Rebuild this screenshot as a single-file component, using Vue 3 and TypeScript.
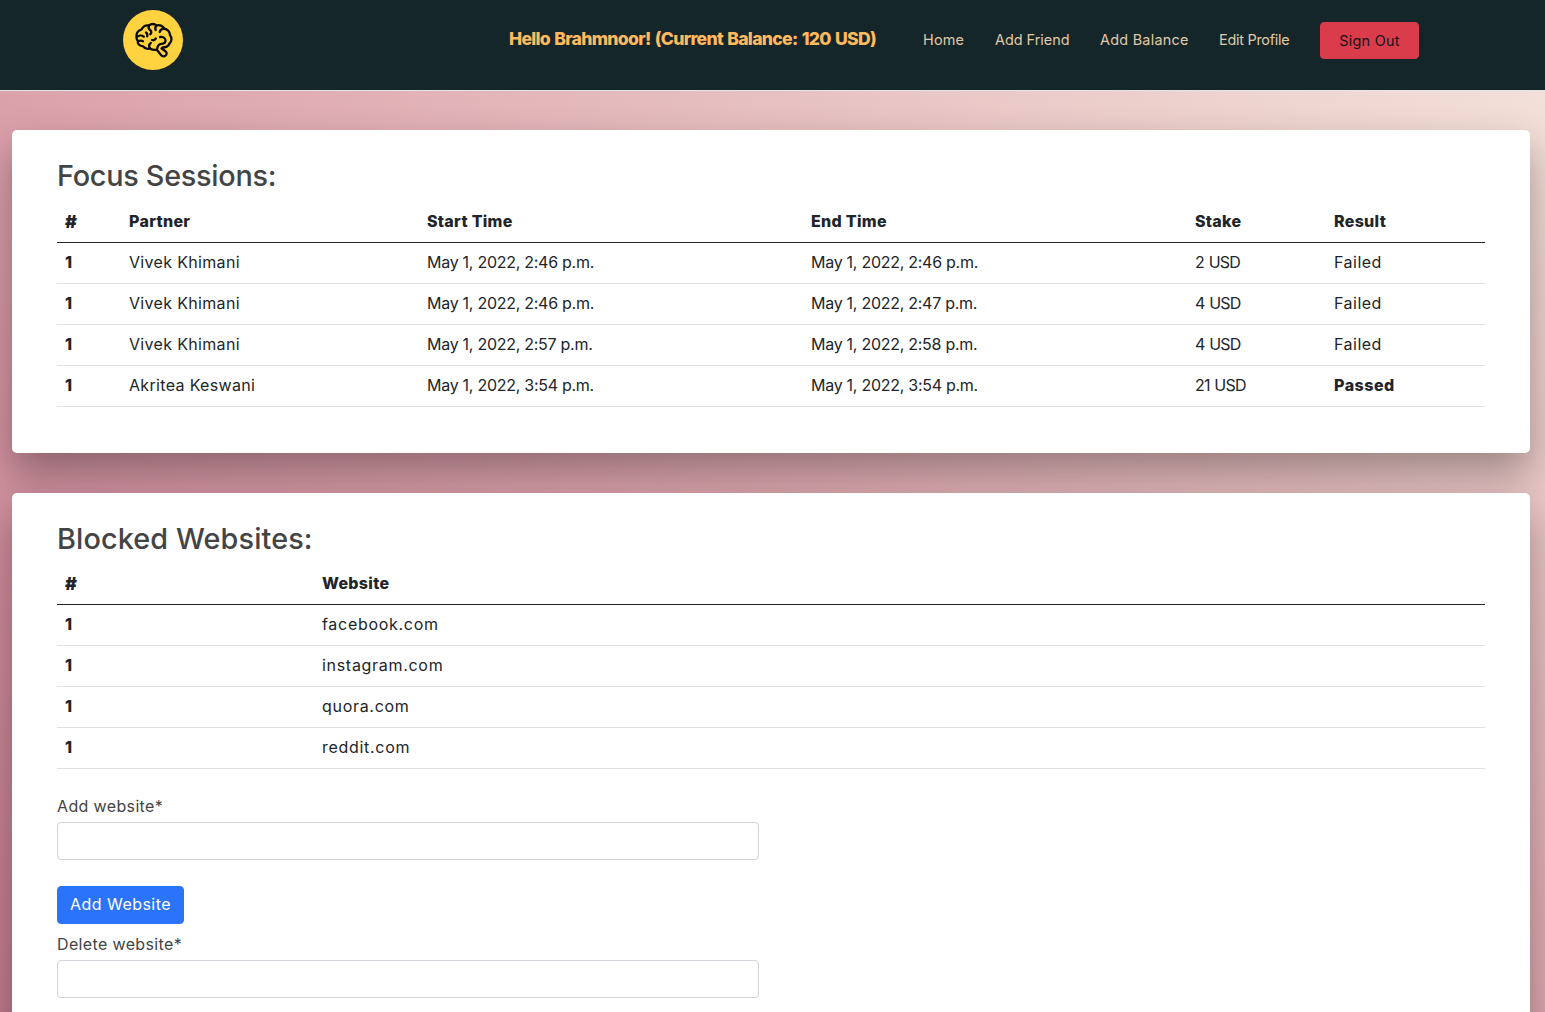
<script setup lang="ts">
interface Session { partner: string; start: string; end: string; stake: string; result: string }
const sessions: Session[] = [
  { partner: 'Vivek Khimani', start: 'May 1, 2022, 2:46 p.m.', end: 'May 1, 2022, 2:46 p.m.', stake: '2 USD', result: 'Failed' },
  { partner: 'Vivek Khimani', start: 'May 1, 2022, 2:46 p.m.', end: 'May 1, 2022, 2:47 p.m.', stake: '4 USD', result: 'Failed' },
  { partner: 'Vivek Khimani', start: 'May 1, 2022, 2:57 p.m.', end: 'May 1, 2022, 2:58 p.m.', stake: '4 USD', result: 'Failed' },
  { partner: 'Akritea Keswani', start: 'May 1, 2022, 3:54 p.m.', end: 'May 1, 2022, 3:54 p.m.', stake: '21 USD', result: 'Passed' },
]
const sites = ['facebook.com', 'instagram.com', 'quora.com', 'reddit.com']
const links = ['Home', 'Add Friend', 'Add Balance', 'Edit Profile']
</script>

<template>
  <div class="page">
    <nav class="navbar">
      <div class="logo">
        <svg width="60" height="60" viewBox="0 0 60 60" fill="none" stroke="#0b0b0b" stroke-width="2.3" stroke-linecap="round" stroke-linejoin="round">
          <path d="M13.500 27C13 23 15.500 20.500 18.500 19.500C20 16.500 23 15 26 15.500C28 13.500 31.500 13.500 33.500 15.500C36.500 14.500 40 16 41 18.500C44.500 19 47 22 47 25C49 27.500 49 31.500 46.500 33.500C45.500 36 42.500 37.500 39.500 37.500L38.500 38.500L42.800 41.500C44.500 43 43.500 46 41 46.300C39.500 46.500 38.500 45.800 37.800 44.800L33.800 39.800C31.500 40.200 29 39.800 27 38.500C24.500 39.300 21.500 38.300 20 36.300C16.500 36.300 14 33.500 15 31C13.800 30 13.500 28.500 13.500 27Z" />
          <path d="M13.800 27c2-1.800 5-2 7-.3M15 31.500c1.500-.8 3.500-1 5-.3M26 15.500c-.8 1.800-.3 3.800 1.500 5 1.200 1 1 2.700-.2 3.700M33.500 15.500c-1.200 1.300-1.500 3-.8 4.500M41 18.500c-2.200.3-3.800 1.500-4.300 3.500M23 22.500c1.200 1 1.600 2.400 1.200 3.800M29 30c1.500.5 3 0 3.800-1.500M27 38.500c-1.300-2-1-4.200.8-5.500M37 27c3-.5 5.500 1 5.500 3.500 0 2-2 3.200-4 3.400-2.300.2-4 2-4.300 4.800" />
        </svg>
      </div>
      <strong class="hello">Hello Brahmnoor! (Current Balance: 120 USD)</strong>
      <ul class="nav-links">
        <li v-for="link in links" :key="link"><a>{{ link }}</a></li>
      </ul>
      <button class="signout" type="button">Sign Out</button>
    </nav>

    <main class="content">
      <section class="card sessions">
        <h2>Focus Sessions:</h2>
        <table>
          <colgroup>
            <col class="c1" /><col class="c2" /><col class="c3" />
            <col class="c3" /><col class="c5" /><col />
          </colgroup>
          <thead>
            <tr><th class="hash">#</th><th>Partner</th><th>Start Time</th><th>End Time</th><th>Stake</th><th>Result</th></tr>
          </thead>
          <tbody>
            <tr v-for="(s, i) in sessions" :key="i">
              <td class="num">1</td>
              <td class="name">{{ s.partner }}</td>
              <td class="date">{{ s.start }}</td>
              <td class="date">{{ s.end }}</td>
              <td class="stake">{{ s.stake }}</td>
              <td class="result" :class="{ passed: s.result === 'Passed' }">{{ s.result }}</td>
            </tr>
          </tbody>
        </table>
      </section>

      <section class="card websites">
        <h2>Blocked Websites:</h2>
        <table>
          <colgroup><col class="w1" /><col /></colgroup>
          <thead><tr><th class="hash">#</th><th>Website</th></tr></thead>
          <tbody>
            <tr v-for="site in sites" :key="site"><td class="num">1</td><td class="site">{{ site }}</td></tr>
          </tbody>
        </table>
        <form class="site-form" @submit.prevent>
          <label for="add-site">Add website*</label>
          <input id="add-site" type="text" />
          <button class="primary" type="submit">Add Website</button>
          <label for="del-site">Delete website*</label>
          <input id="del-site" type="text" />
        </form>
      </section>
    </main>
  </div>
</template>

<style>
html, body { margin: 0; overflow: hidden; }
</style>

<style scoped>
.page {
  height: 1012px;
  overflow: hidden;
  font-family: Inter, "Liberation Sans", sans-serif;
  font-size: 16px;
  color: #212529;
  background: linear-gradient(to top right, #c27b8d 0%, #dba1ab 45%, #f5e6dc 100%);
}
.navbar {
  box-sizing: border-box;
  height: 91px;
  display: flex;
  align-items: center;
  padding: 0 126px 10px 123px;
  background: #15262b;
  border-bottom: 1px solid #dfe6ea;
}
.logo { width: 60px; height: 60px; border-radius: 50%; background: #ffd23f; flex: none; margin-right: auto; }
.logo svg { display: block; }
.hello { font-size: 17.6px; font-weight: 800; letter-spacing: -0.7px; word-spacing: 1.1px; color: #ffb95e; line-height: 1.2; margin-top: -2px; white-space: nowrap; }
.nav-links { display: flex; gap: 30px; list-style: none; margin: 0 30px 0 47px; padding: 0; }
.nav-links a { font-size: 14.4px; color: #e0c9a6; line-height: 1.5; white-space: nowrap; }
.nav-links li:nth-child(1) { width: 42px; }
.nav-links li:nth-child(1) a { letter-spacing: 0.2px; }
.nav-links li:nth-child(2) { width: 75px; }
.nav-links li:nth-child(3) { width: 89px; }
.nav-links li:nth-child(3) a { letter-spacing: 0.27px; }
.nav-links li:nth-child(4) { width: 71px; }
.nav-links li:nth-child(4) a { letter-spacing: -0.25px; }
.signout {
  width: 99px; height: 37px; border: 1px solid #da3c4b; border-radius: 4px;
  background: #da3c4b; color: #14121a; font: inherit; font-size: 14.4px; letter-spacing: 0.25px; padding: 0;
}
.content { padding: 39px 15px 0 12px; display: flex; flex-direction: column; gap: 40px; }
.card {
  background: #fff; border-radius: 5px; padding: 24px 45px 0;
  box-shadow: 0 20px 40px rgba(0, 0, 0, 0.33);
}
.sessions { height: 323px; box-sizing: border-box; }
.websites { box-sizing: border-box; height: 560px; }
h2 { margin: 0; font-size: 28.8px; font-weight: 500; color: #444; line-height: 44px; }
.sessions h2 { margin-bottom: 3px; letter-spacing: -0.27px; }
.websites h2 { margin-bottom: 2px; letter-spacing: 0.12px; }
table { width: 100%; border-collapse: collapse; table-layout: fixed; }
.c1 { width: 64px; }
.c2 { width: 298px; }
.c3 { width: 384px; }
.c5 { width: 139px; }
.w1 { width: 257px; }
th { height: 41px; padding: 0 8px; text-align: left; font-weight: 800; font-size: 16px; letter-spacing: 0.3px; border-bottom: 1px solid #212529; box-sizing: border-box; }
th.hash { font-size: 18px; font-weight: 900; }
td { height: 41px; padding: 0 8px 2px; font-size: 16px; border-bottom: 1px solid #dee2e6; box-sizing: border-box; }
.num, .passed { font-weight: 800; }
.name { letter-spacing: 0.33px; }
.date { letter-spacing: -0.27px; }
.stake { letter-spacing: -0.8px; word-spacing: 1px; }
.result { letter-spacing: 0.5px; }
.site { letter-spacing: 0.7px; }
.site-form { display: flex; flex-direction: column; align-items: flex-start; }
label { font-size: 16px; color: #444; line-height: 24px; margin-top: 25px; margin-bottom: 4px; letter-spacing: 0.36px; }
input { box-sizing: border-box; width: 702px; height: 38px; border: 1px solid #ced4da; border-radius: 4px; background: #fff; }
.primary {
  margin-top: 26px; height: 38px; width: 127px; padding: 0 0 2px;
  border: 1px solid #2a73fb; border-radius: 4px; background: #2a73fb; color: #fff; font: inherit; letter-spacing: 0.45px;
}
.primary + label { margin-top: 8px; }
</style>
